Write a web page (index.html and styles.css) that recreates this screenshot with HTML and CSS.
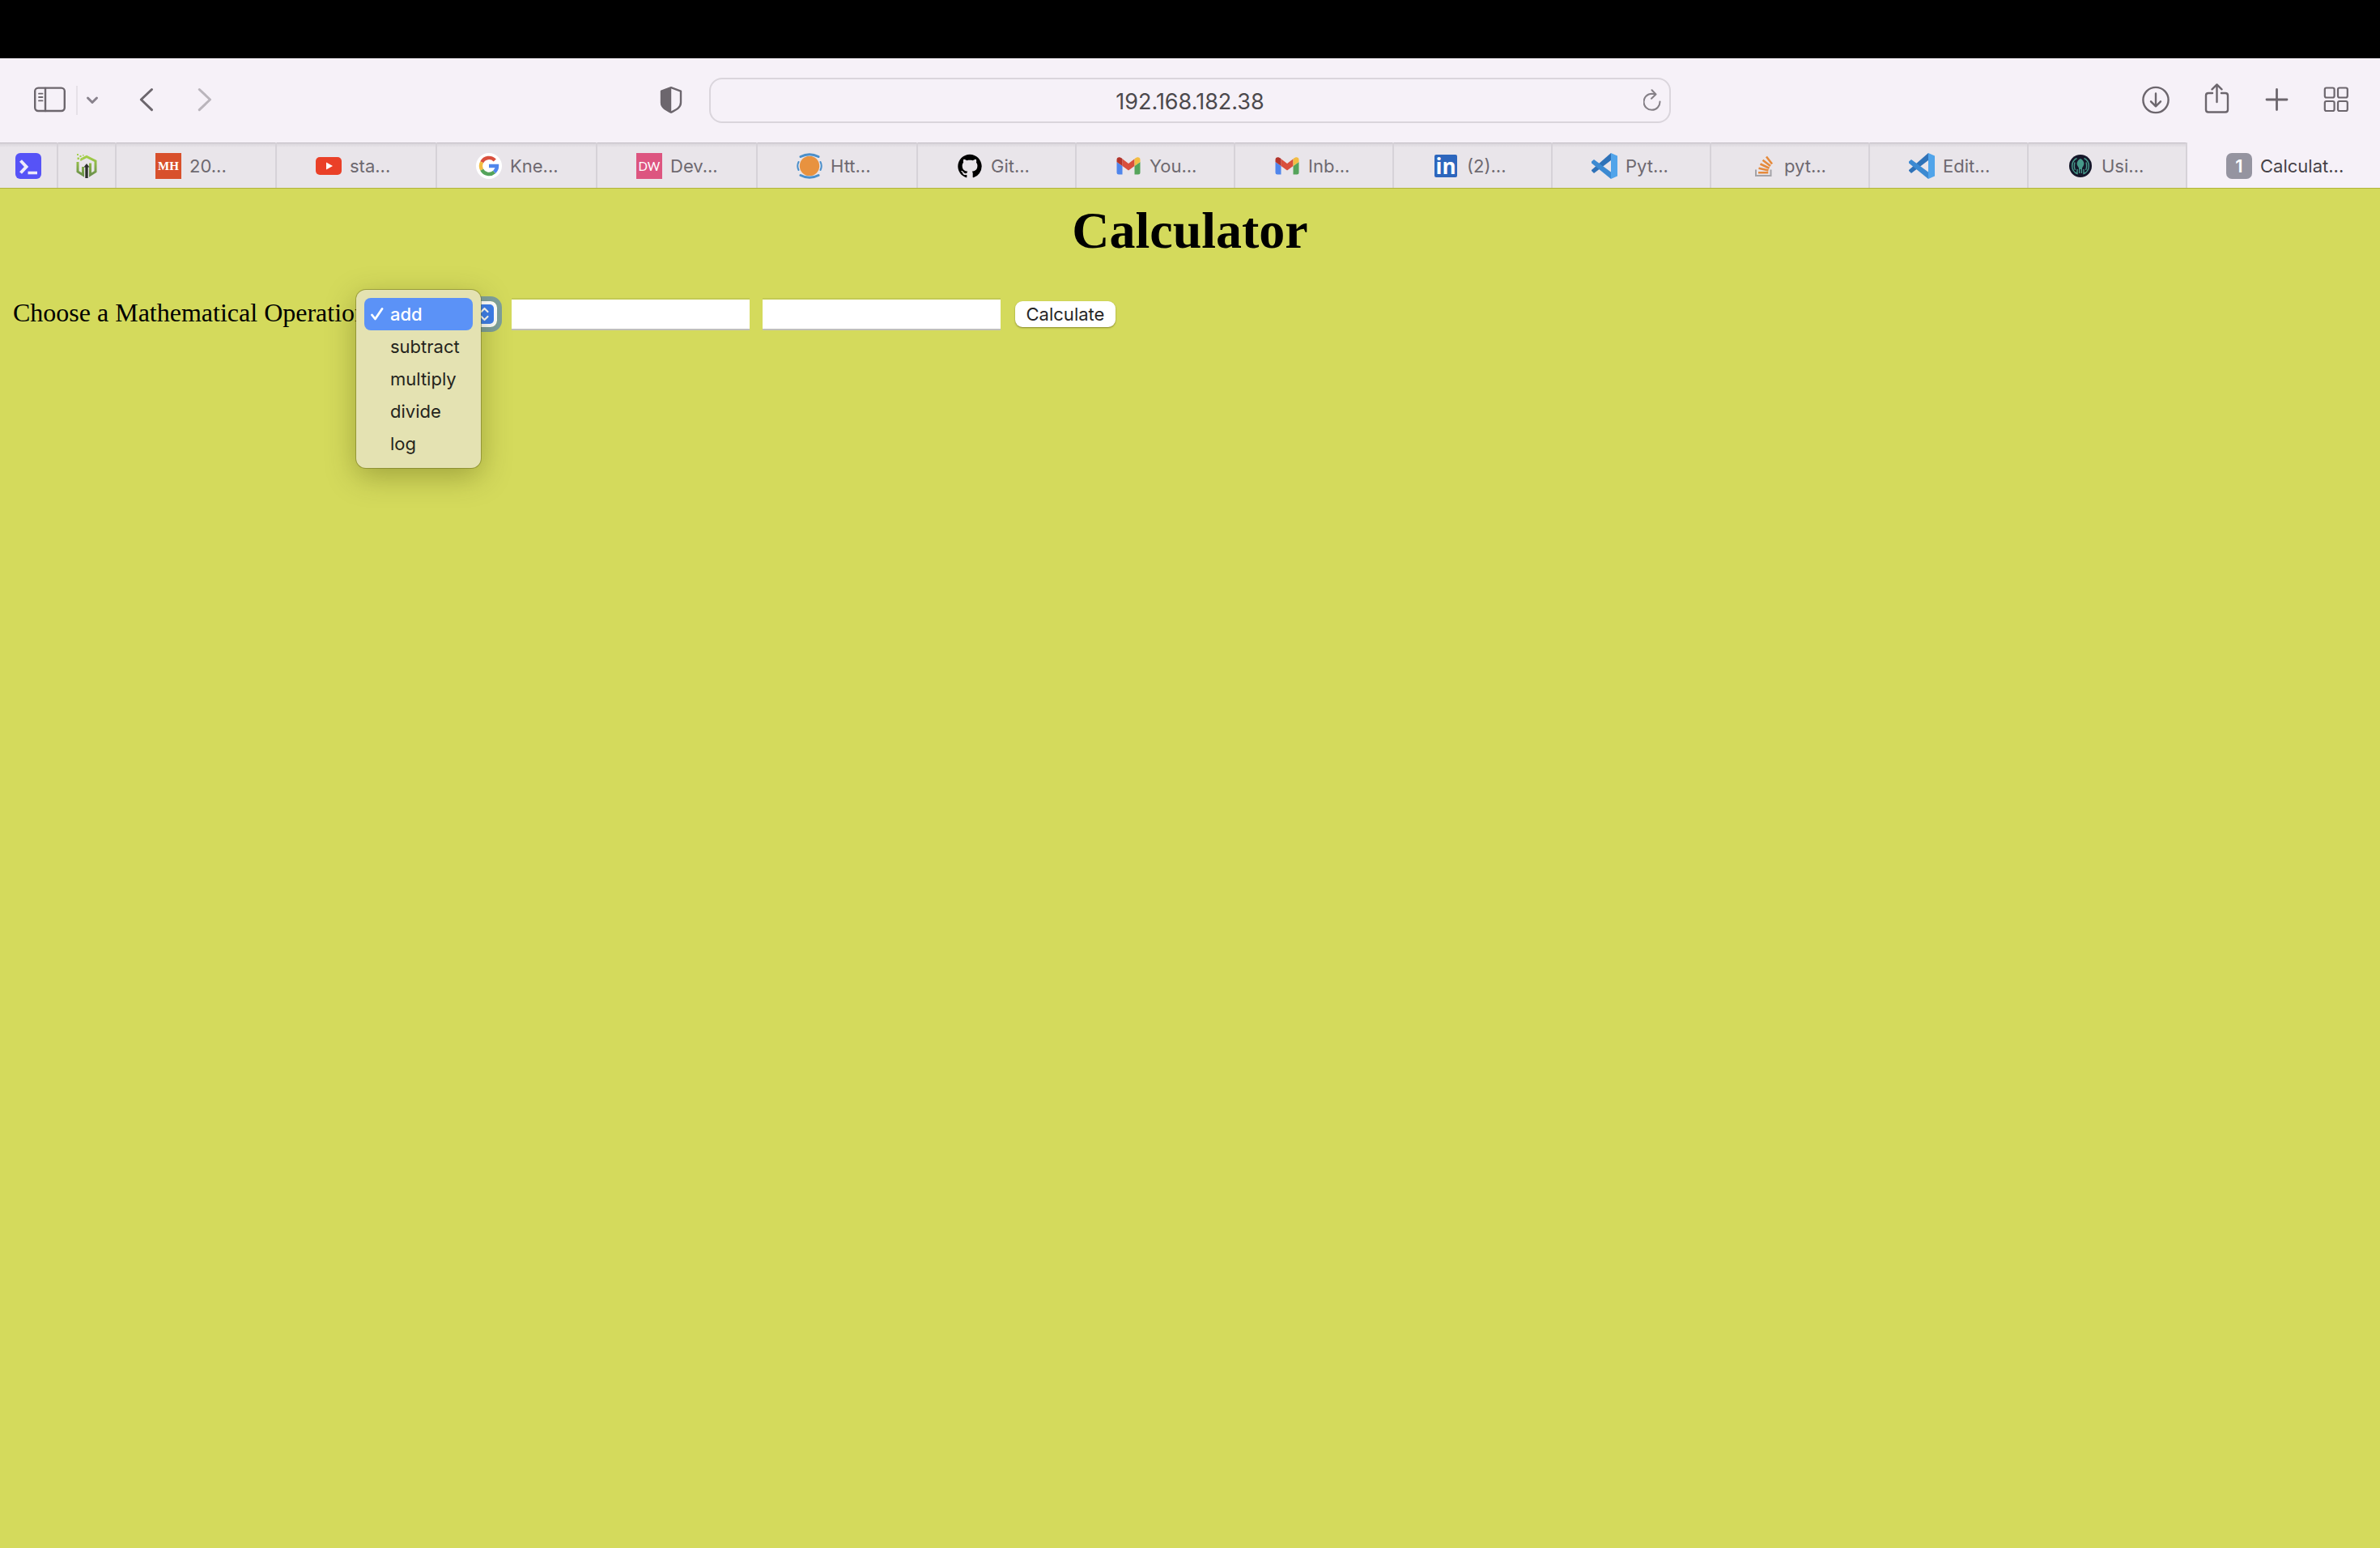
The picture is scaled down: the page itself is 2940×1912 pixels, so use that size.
FILE: index.html
```html
<!DOCTYPE html>
<html lang="en">
<head>
<meta charset="utf-8">
<title>Calculator</title>
<link rel="stylesheet" href="styles.css">
</head>
<body>
<div class="notch-bar"></div>
<header class="toolbar">
  <div class="tools tools-left">
    <button class="tool" type="button" aria-label="Sidebar">
      <svg width="40" height="42" viewBox="0 0 40 42" fill="none" stroke="#6c666d" stroke-width="2.4" stroke-linecap="round"><rect x="1.2" y="5.6" width="36.6" height="28.4" rx="4"/><path d="M14 6v28"/><path stroke-width="1.8" d="M6 12.7h4.5M6 17h4.5M6 21.4h4.5"/></svg>
    </button>
    <span class="tool-divider"></span>
    <button class="tool tool-groups" type="button" aria-label="Tab groups">
      <svg width="16" height="42" viewBox="0 0 16 42" fill="none" stroke="#88828c" stroke-width="3" stroke-linecap="round" stroke-linejoin="round"><path d="M2.5 18l5.500 5.500 5.500-5.500"/></svg>
    </button>
    <button class="tool tool-back" type="button" aria-label="Back">
      <svg width="22" height="42" viewBox="0 0 22 42" fill="none" stroke="#6c666d" stroke-width="3" stroke-linecap="round" stroke-linejoin="round"><path d="M17.500 7.500L4.300 20l13.200 12.700"/></svg>
    </button>
    <button class="tool tool-forward" type="button" aria-label="Forward">
      <svg width="22" height="42" viewBox="0 0 22 42" fill="none" stroke="#bab5bc" stroke-width="3" stroke-linecap="round" stroke-linejoin="round"><path d="M4.300 7.500L17.500 20L4.300 32.700"/></svg>
    </button>
    <button class="tool tool-shield" type="button" aria-label="Privacy report">
      <svg width="28" height="42" viewBox="0 0 28 42" stroke="#6c666d" stroke-width="2.400" stroke-linejoin="round"><path fill="none" d="M14 5.200L26 9.600V23.500C26 30 20 32.500 14 35.800C8 32.500 2 30 2 23.500V9.600Z"/><path fill="#6c666d" stroke="none" d="M14.200 4.500L1 9.400V23.500C1 30 8 33 14.200 36.500Z"/></svg>
    </button>
  </div>
  <div class="address">
    <input class="address-input" type="text" aria-label="Address" value="192.168.182.38">
    <button class="tool reload" type="button" aria-label="Reload">
      <svg width="24" height="42" viewBox="0 0 24 42" fill="none" stroke="#858087" stroke-width="2" stroke-linecap="round" stroke-linejoin="round"><path d="M20.500 22.500A10 10 0 1 1 10.500 12.800L15 13.400M10.500 8.200L15.500 13.500L10 18.800"/></svg>
    </button>
  </div>
  <div class="tools tools-right">
    <button class="tool" type="button" aria-label="Downloads">
      <svg width="36" height="42" viewBox="0 0 36 42" fill="none" stroke="#6c666d" stroke-width="2.400" stroke-linecap="round" stroke-linejoin="round"><circle cx="18" cy="20.500" r="15.600"/><path d="M18 12.500V28M12 22.300L18 28.300L24 22.300"/></svg>
    </button>
    <button class="tool" type="button" aria-label="Share">
      <svg width="34" height="42" viewBox="0 0 34 42" fill="none" stroke="#6c666d" stroke-width="2.400" stroke-linecap="round" stroke-linejoin="round"><path d="M11 12H6Q3 12 3 15V32.500Q3 35.500 6 35.500H27Q30 35.500 30 32.500V15Q30 12 27 12H22M16.500 23V1.500M10.500 7.300L16.500 1.400L22.500 7.300"/></svg>
    </button>
    <button class="tool" type="button" aria-label="New tab">
      <svg width="32" height="42" viewBox="0 0 32 42" fill="none" stroke="#6c666d" stroke-width="2.800" stroke-linecap="round"><path d="M15.500 7.500V32.500M3 20H28"/></svg>
    </button>
    <button class="tool" type="button" aria-label="Tab overview">
      <svg width="32" height="42" viewBox="0 0 32 42" fill="none" stroke="#6c666d" stroke-width="2.200"><rect x="1.800" y="5.500" width="11.800" height="12" rx="2"/><rect x="18" y="5.500" width="11.800" height="12" rx="2"/><rect x="1.800" y="22" width="11.800" height="12" rx="2"/><rect x="18" y="22" width="11.800" height="12" rx="2"/></svg>
    </button>
  </div>
</header>
<nav class="tabs" aria-label="Tabs">
  <a class="tab tab-pinned" href="#" aria-label="Terminal">
    <svg class="favicon" viewBox="0 0 32 32"><rect width="32" height="32" rx="6" fill="#5653f7"/><path d="M6.500 9.500L13.500 17L6.500 24.500" fill="none" stroke="#eeeafa" stroke-width="4"/><path d="M15.500 24.500H27" stroke="#eeeafa" stroke-width="3.600"/></svg>
  </a>
  <a class="tab tab-pinned" href="#" aria-label="Hexagon">
    <svg class="favicon" viewBox="0 0 32 32"><defs><linearGradient id="leaf" gradientUnits="userSpaceOnUse" x1="0" y1="4" x2="0" y2="28"><stop offset="0" stop-color="#a4d046"/><stop offset="1" stop-color="#6a8f4c"/></linearGradient></defs><path d="M9 8L16 4.500L27 10V23L20.500 27V12.500M11.500 17V27L5 23V11" fill="none" stroke="url(#leaf)" stroke-width="3"/><path d="M16 31V16" stroke="#2d302c" stroke-width="3.400"/><path d="M12.500 17.500L16 13L19.500 17.500Z" fill="#2d302c"/><path d="M4 1h2v2h-2zM7.500 3h2v2h-2zM4.500 5.500h2.500v2.500h-2.500zM10 6h2v2h-2zM11 2h1.500v1.500h-1.500zM8 7.500h2v2h-2z" fill="#a4cf50"/></svg>
  </a>
  <a class="tab" href="#"><span class="favicon badge badge-mh">MH</span><span class="tab-title">20...</span></a>
  <a class="tab" href="#">
    <svg class="favicon" viewBox="0 0 32 32"><rect y="5" width="32" height="22" rx="5" fill="#ea4028"/><path d="M13 11.500L21 16L13 20.500Z" fill="#fff"/></svg>
    <span class="tab-title">sta...</span></a>
  <a class="tab" href="#">
    <svg class="favicon" viewBox="0 0 32 32"><circle cx="16" cy="16" r="16" fill="#fff"/><g fill="none" stroke-width="4.400"><path stroke="#d94f3d" d="M23.300 9A10 10 0 0 0 7.200 11.300"/><path stroke="#f3bd42" d="M7.200 11.300A10 10 0 0 0 7.200 20.700"/><path stroke="#55a45b" d="M7.200 20.700A10 10 0 0 0 22.600 23.500"/><path stroke="#5086ec" d="M22.600 23.500A10 10 0 0 0 26 16H16"/></g></svg>
    <span class="tab-title">Kne...</span></a>
  <a class="tab" href="#"><span class="favicon badge badge-dw">DW</span><span class="tab-title">Dev...</span></a>
  <a class="tab" href="#">
    <svg class="favicon" viewBox="0 0 32 32"><circle cx="16" cy="16" r="12.200" fill="#e8923f"/><g fill="none" stroke="#4b8fca" stroke-linecap="round"><path stroke-width="3" d="M5 4.500Q16-1.200 27 4.500M5 27.500Q16 33.200 27 27.500"/><path stroke-width="2" d="M2.500 11Q0 16 2.500 21M29.500 11Q32 16 29.500 21"/></g></svg>
    <span class="tab-title">Htt...</span></a>
  <a class="tab" href="#">
    <svg class="favicon" viewBox="-0.700 -0.900 17.400 17.400"><path d="M8 0C3.580 0 0 3.580 0 8c0 3.540 2.290 6.530 5.470 7.590.4.070.55-.17.55-.38 0-.19-.01-.82-.01-1.490-2.010.37-2.530-.49-2.690-.94-.09-.23-.48-.94-.82-1.130-.28-.15-.68-.52-.01-.53.63-.01 1.080.58 1.230.82.72 1.210 1.870.87 2.330.66.07-.52.28-.87.51-1.070-1.780-.2-3.640-.89-3.640-3.950 0-.87.31-1.590.82-2.150-.08-.2-.36-1.020.08-2.120 0 0 .67-.21 2.200.82.64-.18 1.320-.27 2-.27s1.360.09 2 .27c1.530-1.040 2.200-.82 2.200-.82.44 1.100.16 1.920.08 2.120.51.56.82 1.270.82 2.150 0 3.070-1.870 3.750-3.650 3.950.29.25.54.73.54 1.480 0 1.070-.01 1.930-.01 2.200 0 .21.15.46.55.38A8.010 8.010 0 0 0 16 8c0-4.420-3.580-8-8-8z"/></svg>
    <span class="tab-title">Git...</span></a>
  <a class="tab" href="#">
    <svg class="favicon" viewBox="0 0 32 32"><path fill="#5086ec" d="M1.500 11L8.500 16V26.500H4Q1.500 26.500 1.500 24Z"/><path fill="#55a45b" d="M30.500 11L23.500 16V26.500H28Q30.500 26.500 30.500 24Z"/><path fill="#d94f3d" d="M8.500 7.200L16 13L23.500 7.200V16L16 21.500L8.500 16Z"/><path fill="#b3342b" d="M1.500 8.500C1.500 5 5 4 8.500 7.200V16L1.500 11Z"/><path fill="#f3bd42" d="M30.500 8.500C30.500 5 27 4 23.500 7.200V16L30.500 11Z"/></svg>
    <span class="tab-title">You...</span></a>
  <a class="tab" href="#">
    <svg class="favicon" viewBox="0 0 32 32"><path fill="#5086ec" d="M1.500 11L8.500 16V26.500H4Q1.500 26.500 1.500 24Z"/><path fill="#55a45b" d="M30.500 11L23.500 16V26.500H28Q30.500 26.500 30.500 24Z"/><path fill="#d94f3d" d="M8.500 7.200L16 13L23.500 7.200V16L16 21.500L8.500 16Z"/><path fill="#b3342b" d="M1.500 8.500C1.500 5 5 4 8.500 7.200V16L1.500 11Z"/><path fill="#f3bd42" d="M30.500 8.500C30.500 5 27 4 23.500 7.200V16L30.500 11Z"/></svg>
    <span class="tab-title">Inb...</span></a>
  <a class="tab" href="#"><span class="favicon badge badge-in">in</span><span class="tab-title">(2)...</span></a>
  <a class="tab" href="#">
    <svg class="favicon" viewBox="0 0 32 32"><path fill="#2f72b8" d="M0 22L3 25L24 9V0L0 21Z"/><path fill="#3c8ad2" d="M0 10.500L3 8L24 23.500V32L0 12.500Z"/><path fill="#51a4ea" d="M24 0L32 3.500V28.500L24 32Z"/></svg>
    <span class="tab-title">Pyt...</span></a>
  <a class="tab" href="#">
    <svg class="favicon" viewBox="0 0 32 32" fill="none"><path stroke="#a4a3a8" stroke-width="2" d="M7 20.500V28H25.500V20.500"/><path stroke="#e58a3c" stroke-width="2.600" d="M10 24.300H22.300M10.500 18.800L22.500 21.500M12.500 13.500L23.500 18.700M15.500 8.800L25 16M20 4.500L27 13.500"/></svg>
    <span class="tab-title">pyt...</span></a>
  <a class="tab" href="#">
    <svg class="favicon" viewBox="0 0 32 32"><path fill="#2f72b8" d="M0 22L3 25L24 9V0L0 21Z"/><path fill="#3c8ad2" d="M0 10.500L3 8L24 23.500V32L0 12.500Z"/><path fill="#51a4ea" d="M24 0L32 3.500V28.500L24 32Z"/></svg>
    <span class="tab-title">Edit...</span></a>
  <a class="tab" href="#">
    <svg class="favicon" viewBox="0 0 32 32"><circle cx="16" cy="16" r="14" fill="#15172a"/><path fill="#46998a" d="M16 7C12 9 10.500 13 12.500 16L14 18.500V25H15.300V20H16.700V25H18V18.500L19.500 16C21.500 13 20 9 16 7Z"/><g fill="none" stroke="#46998a" stroke-width="1.400"><path d="M11.500 6.500A10.500 10.500 0 0 0 12 25.500V20M20.500 6.500A10.500 10.500 0 0 1 20 25.500V20"/><path d="M9 11.500Q7.500 17 9.500 21M23 11.500Q24.500 17 22.500 21"/></g></svg>
    <span class="tab-title">Usi...</span></a>
  <a class="tab tab-active" href="#" aria-current="page"><span class="favicon badge badge-one">1</span><span class="tab-title">Calculat...</span></a>
</nav>
<main class="page">
  <h1 class="title">Calculator</h1>
  <form class="calc">
    <label class="calc-label" for="operation">Choose a Mathematical Operation:</label>
    <div class="picker">
      <select class="picker-select" id="operation">
        <option selected>add</option>
        <option>subtract</option>
        <option>multiply</option>
        <option>divide</option>
        <option>log</option>
      </select>
      <svg class="picker-arrows" viewBox="0 0 20 24" fill="none"><rect width="20" height="24" rx="5" fill="#3b7df0"/><path stroke="#fff" stroke-width="2.200" stroke-linecap="round" stroke-linejoin="round" d="M4.500 9L8.500 5L12.500 9M4.500 15L8.500 19L12.500 15"/></svg>
      <ul class="menu" role="listbox" aria-label="Operations">
        <li class="menu-item menu-item-on" role="option" aria-selected="true"><svg class="menu-check" viewBox="0 0 16 20" fill="none" stroke="#fff" stroke-width="2.800" stroke-linecap="round" stroke-linejoin="round"><path d="M1.500 11L5.500 16L14 3.500"/></svg>add</li>
        <li class="menu-item" role="option">subtract</li>
        <li class="menu-item" role="option">multiply</li>
        <li class="menu-item" role="option">divide</li>
        <li class="menu-item" role="option">log</li>
      </ul>
    </div>
    <input class="number" type="text" aria-label="First number">
    <input class="number" type="text" aria-label="Second number">
    <button class="calc-button" type="button">Calculate</button>
  </form>
</main>
</body>
</html>
```
FILE: styles.css
```css
* {
  box-sizing: border-box;
}

body {
  margin: 0;
  min-height: 100vh;
  display: flex;
  flex-direction: column;
  background: #d4da5c;
  font-family: Inter, "Liberation Sans", sans-serif;
  font-size: 22px;
}

button,
input,
select {
  font: inherit;
}

.notch-bar {
  height: 72px;
  background: #000;
}

/* Browser toolbar */

.toolbar {
  display: grid;
  grid-template-columns: 1fr minmax(0, 1188px) 1fr;
  align-items: center;
  height: 104px;
  background: #f6f1f8;
}

.tools {
  display: flex;
  align-items: center;
}

.tools-left {
  padding: 0 33px 0 42px;
}

.tools-right {
  justify-content: flex-end;
  gap: 41px;
  padding-right: 38px;
}

.tool {
  display: flex;
  padding: 0;
  border: 0;
  background: none;
}

.tool-divider {
  width: 2px;
  height: 36px;
  margin: 0 10px 0 12px;
  background: #e6e1e8;
}

.tool-back {
  margin-left: 48px;
}

.tool-forward {
  margin-left: 50px;
}

.tool-shield {
  margin-left: auto;
}

.address {
  display: flex;
  align-items: center;
  height: 56px;
  border: 2px solid #dad5dc;
  border-radius: 16px;
}

.address-input {
  flex: 1;
  min-width: 0;
  padding: 2px 0 0 32px;
  border: 0;
  outline: 0;
  background: none;
  color: #4c494d;
  font-size: 27px;
  text-align: center;
}

.reload {
  width: 32px;
}

/* Tab strip */

.tabs {
  display: grid;
  grid-template-columns: 72px 72px repeat(5, 198fr) repeat(8, 196fr) 238fr;
  height: 56px;
  background: linear-gradient(#c4bfc6 1px, #d8d4da 1px, #e9e5ea 6px);
}

.tab {
  display: flex;
  align-items: center;
  gap: 10px;
  min-width: 0;
  padding: 2px 0 0 48px;
  border-right: 2px solid #d6d2d8;
  color: #6e6970;
  text-decoration: none;
  white-space: nowrap;
}

.tab-pinned {
  justify-content: center;
  padding-left: 0;
}

.tab-active {
  border-right: 0;
  background: #f6f1f8;
  color: #464247;
}

.favicon {
  flex: none;
  width: 32px;
  height: 32px;
}

.badge {
  display: flex;
  align-items: center;
  justify-content: center;
  color: #fff;
}

.badge-mh {
  background: #d8502c;
  font: bold 15px "Liberation Serif", serif;
}

.badge-dw {
  background: #dd5580;
  font: 15px Lato, sans-serif;
}

.badge-in {
  border: 2px solid #e9e5ea;
  border-radius: 4px;
  background: #2d66bd;
  font: bold 26px/24px "Open Sans", sans-serif;
}

.badge-one {
  border-radius: 7px;
  background: #9594a0;
  font-weight: 600;
}

/* Calculator page */

.page {
  flex: 1;
  padding: 16px;
  border-top: 1px solid #b0b43c;
}

.title {
  margin: 0 0 45px;
  color: #000;
  font: bold 64px/72px "Liberation Serif", serif;
  text-align: center;
}

.calc {
  display: flex;
  align-items: center;
  gap: 16px;
  height: 44px;
}

.calc-label {
  margin-right: -8px;
  padding-bottom: 4px;
  color: #000;
  font: 32px/38px "Liberation Serif", serif;
  white-space: nowrap;
}

.picker {
  position: relative;
  width: 143px;
  height: 32px;
  margin-right: 2px;
}

.picker-select {
  display: block;
  width: 100%;
  height: 100%;
  padding: 0 10px;
  border: 0;
  border-radius: 8px;
  outline: 6px solid #7e9f9c;
  appearance: none;
  background: #fff;
  color: #222;
}

.picker-arrows {
  position: absolute;
  top: 4px;
  right: 4px;
  width: 20px;
  height: 24px;
}

.menu {
  position: absolute;
  top: -14px;
  left: -31px;
  width: 154px;
  margin: 0;
  padding: 10px;
  border-radius: 12px;
  background: #e4e2b2;
  box-shadow: 0 0 0 1px rgba(90, 90, 20, 0.4), 0 10px 36px rgba(60, 60, 0, 0.35);
  list-style: none;
}

.menu-item {
  position: relative;
  padding-left: 32px;
  color: #24241c;
  line-height: 40px;
}

.menu-item-on {
  border-radius: 8px;
  background: #5b92f7;
  color: #fff;
  font-weight: 500;
}

.menu-check {
  position: absolute;
  top: 10px;
  left: 8px;
  width: 16px;
  height: 20px;
}

.number {
  width: 294px;
  height: 40px;
  padding: 0 6px;
  border: 0;
  border-top: 2px solid #c3ca55;
  border-bottom: 2px solid #bfbfbb;
  outline: 0;
  background: #fff;
}

.calc-button {
  width: 124px;
  height: 32px;
  margin-left: 2px;
  padding: 0;
  border: 0;
  border-radius: 9px;
  background: #fff;
  box-shadow: 0 1px 2px rgba(60, 60, 0, 0.5);
  color: #262626;
}
```
